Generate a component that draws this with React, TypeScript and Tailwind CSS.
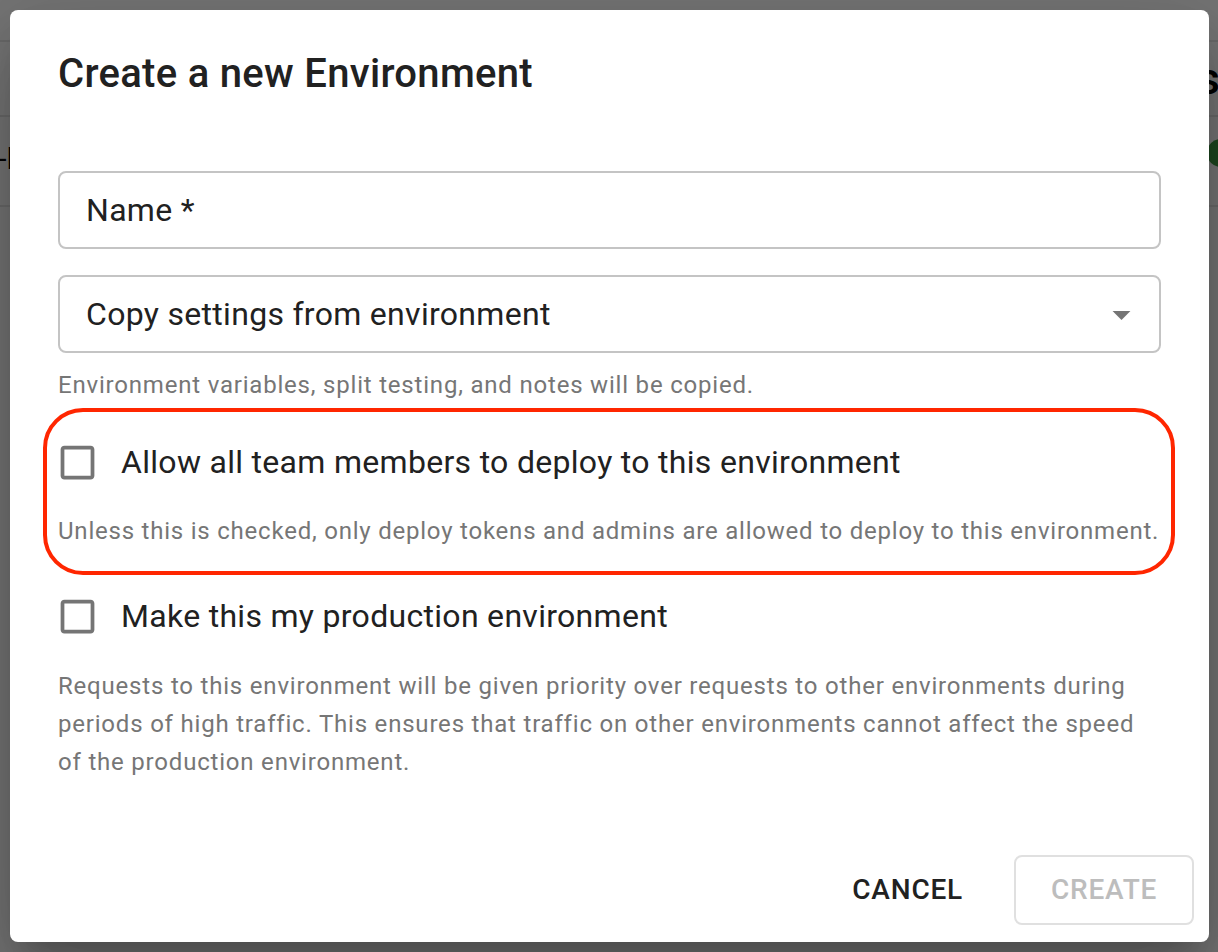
const CheckboxBlank = () => (
  <svg viewBox="0 0 24 24" className="size-[45px] shrink-0 fill-[#757575]">
    <path d="M19 5v14H5V5h14m0-2H5c-1.11 0-2 .9-2 2v14c0 1.1.89 2 2 2h14c1.1 0 2-.9 2-2V5c0-1.1-.9-2-2-2z" />
  </svg>
);

const ArrowDrop = () => (
  <svg viewBox="0 0 24 24" className="size-[43px] fill-[#757575]">
    <path d="M7 10l5 5 5-5z" />
  </svg>
);

const BackgroundPage = () => {
  return (
    <div className="flex flex-col bg-white">
      <div className="h-[42px] border-b-2 border-[#e6e6e6]" />
      <div className="h-[75px] border-b-2 border-[#e6e6e6] flex items-center justify-end overflow-hidden">
        <span className="text-[44px] font-medium text-black mr-[-2px]">Environments</span>
      </div>
      <div className="h-[90px] border-b-2 border-[#e6e6e6] flex items-center justify-between overflow-hidden">
        <span className="text-[30px] text-black ml-[-12px] mt-[-6px]">r-l</span>
        <span className="w-[60px] h-[28px] rounded-full bg-[#3f9a44] mr-[-49px] mt-[-16px]" />
      </div>
    </div>
  );
};

export default function App() {
  return (
    <div className="relative h-[952px] w-full overflow-hidden font-['Roboto',sans-serif]">
      <BackgroundPage />
      <div className="absolute inset-0 bg-[rgba(0,0,0,0.54)]" />

      <div className="absolute left-[10px] top-[10px] w-[1199px] h-[932px] bg-white rounded-[8px] flex flex-col shadow-[0_22px_30px_-14px_rgba(0,0,0,0.2),0_48px_76px_6px_rgba(0,0,0,0.14),0_18px_92px_16px_rgba(0,0,0,0.12)]">
        <h2 className="pl-[48px] pt-[32px] text-[40px] leading-[64px] font-medium tracking-[0.3px] text-[#212121]">
          Create a new Environment
        </h2>

        <div className="flex flex-col px-[48px]">
          <div className="mt-[65px] h-[78px] border-2 border-[#c4c4c4] rounded-[8px] flex items-center px-[26px] text-[32px] text-[#212121] tracking-[0.3px]">
            Name *
          </div>

          <div className="mt-[26px] h-[78px] border-2 border-[#c4c4c4] rounded-[8px] flex items-center justify-between pl-[26px] pr-[16px] text-[32px] text-[#212121] tracking-[0.3px]">
            <span>Copy settings from environment</span>
            <ArrowDrop />
          </div>

          <p className="mt-[17px] text-[24px] leading-[30px] tracking-[0.8px] text-[#767676]">
            Environment variables, split testing, and notes will be copied.
          </p>

          <label className="mt-[38px] h-[48px] flex items-center">
            <span className="ml-[-3px]">
              <CheckboxBlank />
            </span>
            <span className="ml-[21px] text-[32px] text-[#212121] tracking-[0.3px]">
              Allow all team members to deploy to this environment
            </span>
          </label>

          <p className="mt-[30px] whitespace-nowrap text-[24px] leading-[30px] tracking-[0.78px] text-[#767676]">
            Unless this is checked, only deploy tokens and admins are allowed to deploy to this environment.
          </p>

          <label className="mt-[46px] h-[48px] flex items-center">
            <span className="ml-[-3px]">
              <CheckboxBlank />
            </span>
            <span className="ml-[21px] text-[32px] text-[#212121] tracking-[0.3px]">
              Make this my production environment
            </span>
          </label>

          <p className="mt-[27px] text-[24px] leading-[38px] tracking-[0.8px] text-[#767676]">
            Requests to this environment will be given priority over requests to other environments during
            periods of high traffic. This ensures that traffic on other environments cannot affect the speed
            of the production environment.
          </p>
        </div>

        <div className="mt-auto flex items-center justify-end gap-[35px] pr-[15px] pb-[17px]">
          <button className="px-[16px] h-[70px] text-[28px] font-medium tracking-[0.8px] text-[#212121]">
            CANCEL
          </button>
          <button className="w-[180px] h-[70px] border-2 border-[#e0e0e0] rounded-[8px] text-[28px] font-medium tracking-[0.8px] text-[#bdbdbd]">
            CREATE
          </button>
        </div>

        <div className="absolute left-[33px] top-[398px] w-[1132px] h-[167px] border-4 border-[#ff2600] rounded-[40px] pointer-events-none" />
      </div>
    </div>
  );
}
